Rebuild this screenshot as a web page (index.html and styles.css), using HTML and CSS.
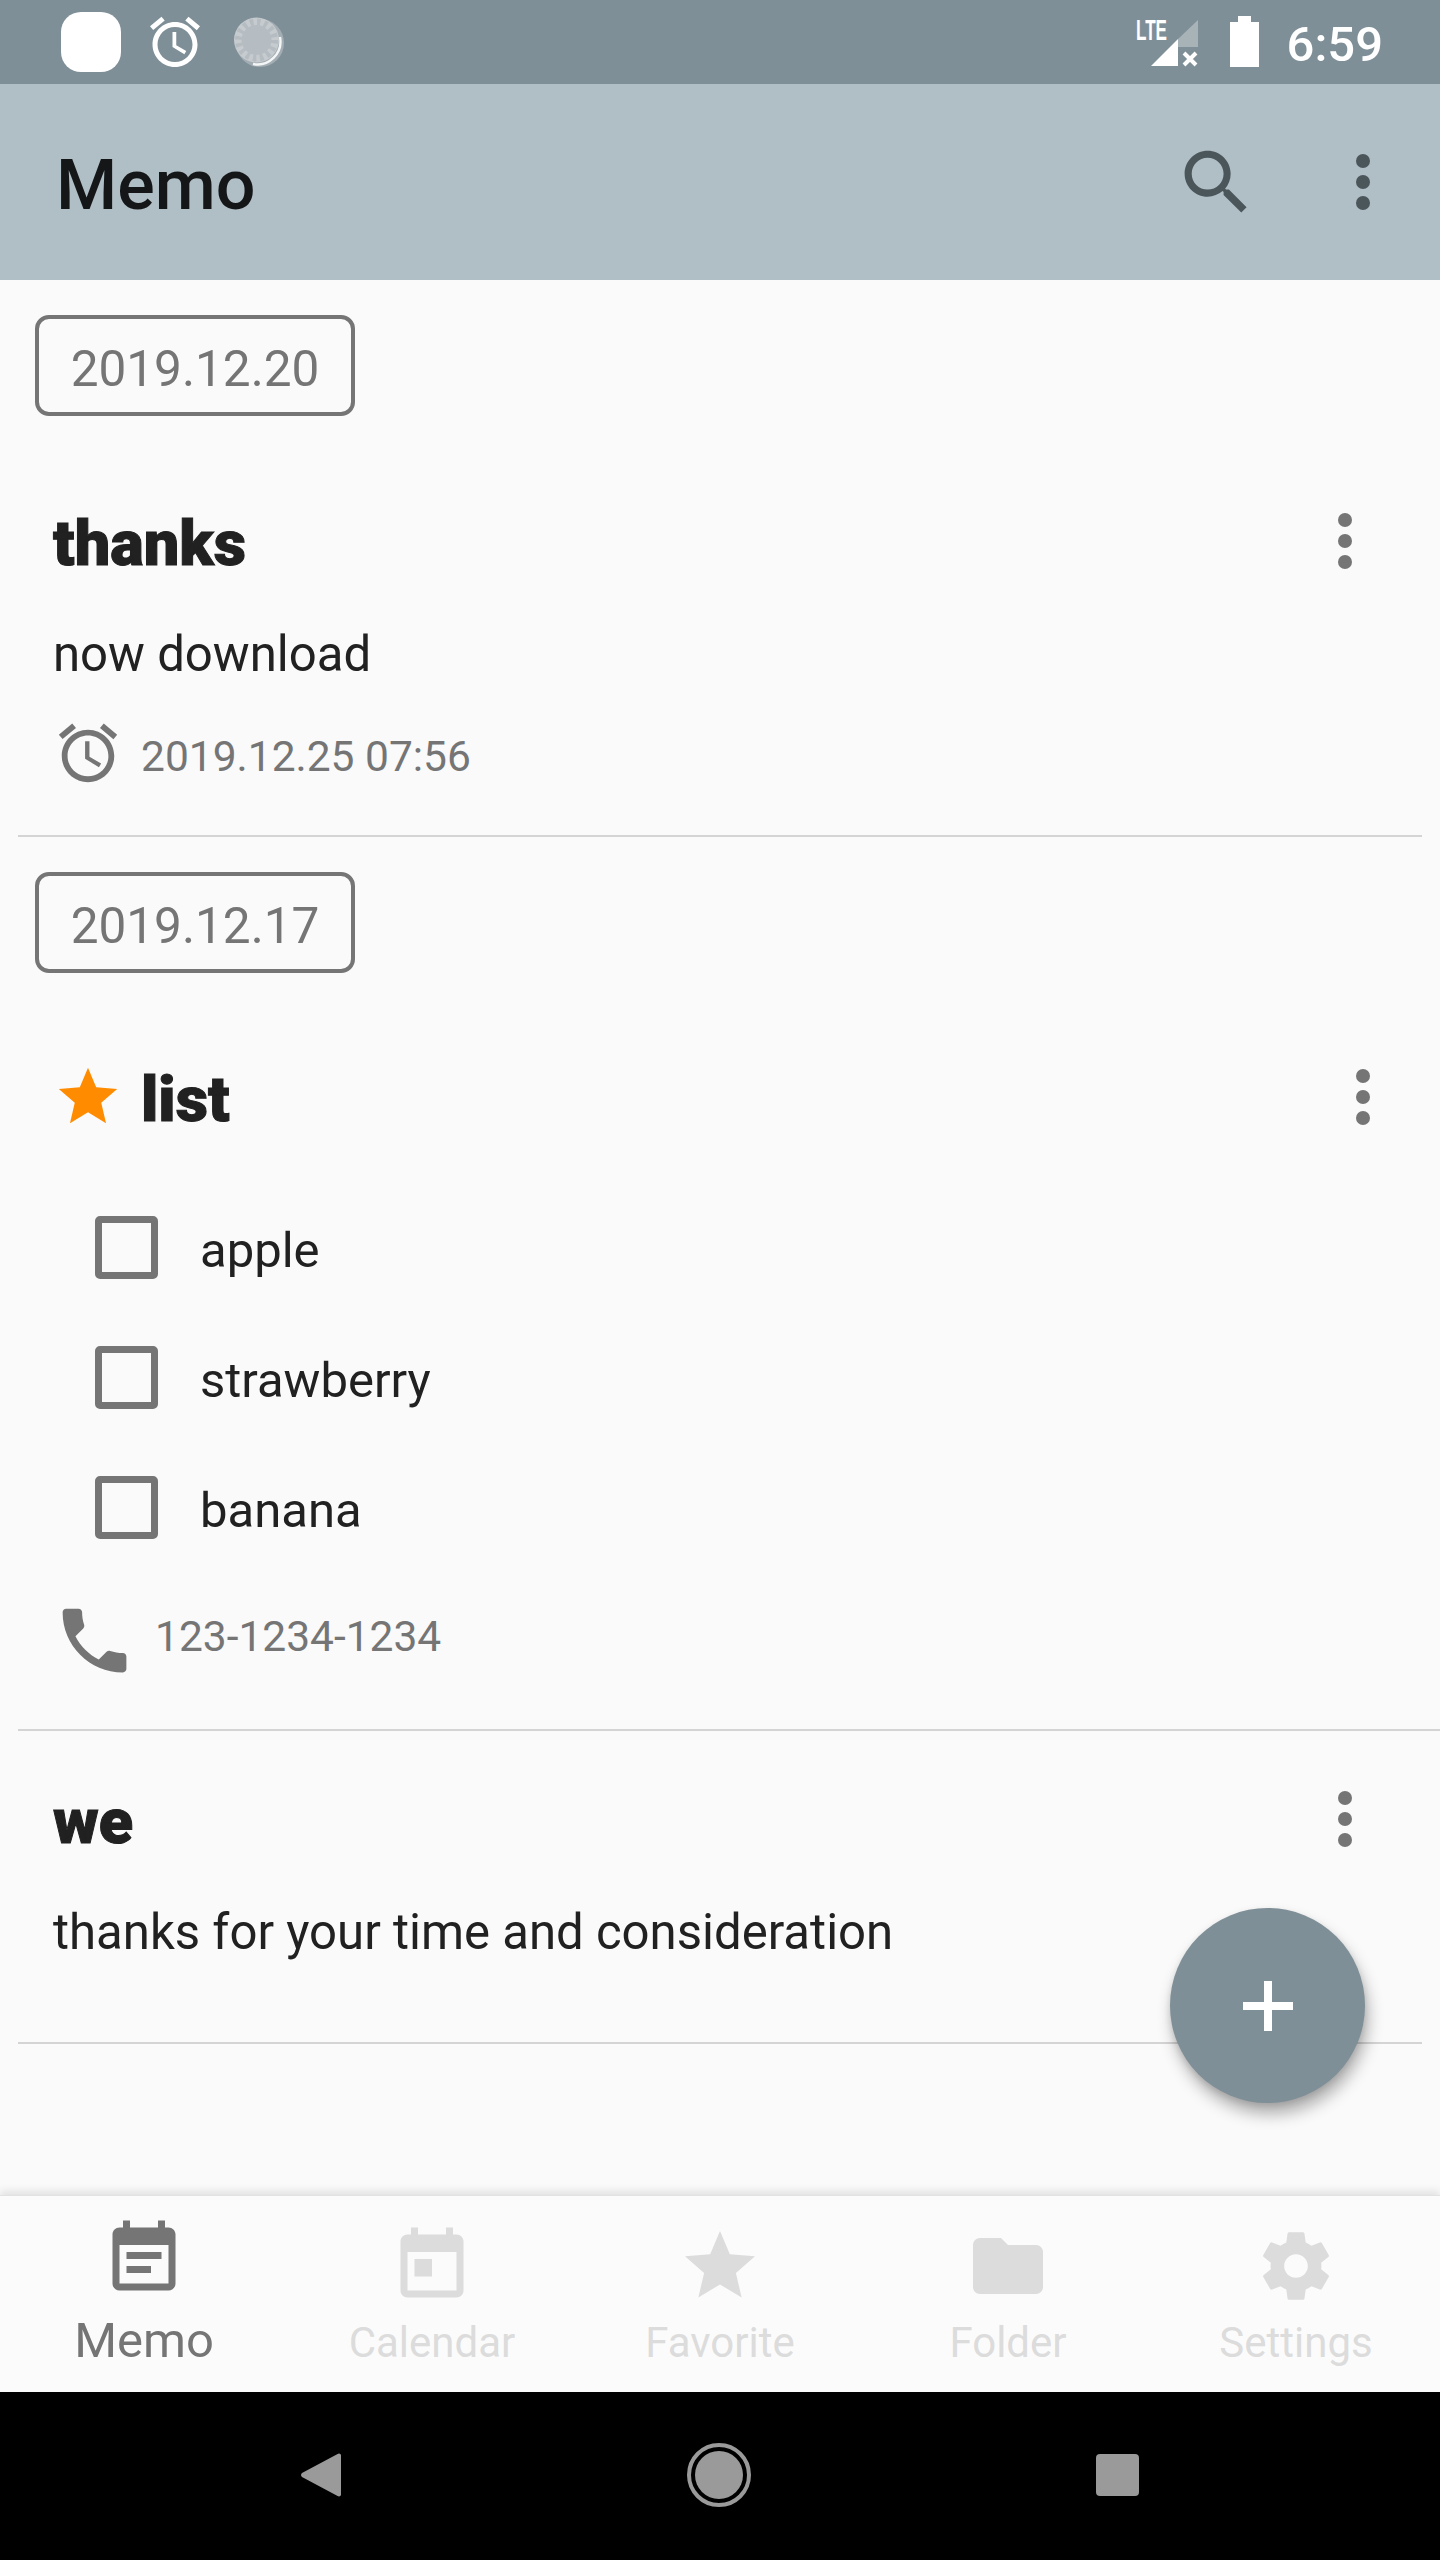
FILE: index.html
```html
<!DOCTYPE html>
<html lang="en">
<head>
<meta charset="utf-8">
<title>Memo</title>
<link rel="stylesheet" href="styles.css">
</head>
<body>
<div class="phone">
  <header class="status">
    <div class="status-left">
      <span class="app-dot"></span>
      <svg class="ic-60" viewBox="0 0 24 24"><path class="white" d="M22 5.72l-4.6-3.86-1.29 1.53 4.6 3.86L22 5.72zM7.88 3.39L6.6 1.86 2 5.71l1.29 1.53 4.59-3.85zM12.5 8H11v6l4.75 2.85.75-1.23-4-2.37V8zM12 4c-4.97 0-9 4.03-9 9s4.03 9 9 9 9-4.03 9-9-4.03-9-9-9zm0 16c-3.87 0-7-3.13-7-7s3.13-7 7-7 7 3.13 7 7-3.13 7-7 7z"/></svg>
      <svg class="ic-60" viewBox="0 0 60 60">
        <circle cx="31" cy="31" r="24" fill="#a3aeb4"/>
        <circle cx="27.500" cy="28" r="22.500" fill="#c6cbcf"/>
        <path d="M51 25a23 23 0 0 1-27 27" fill="none" stroke="#f4f6f6" stroke-width="2.400"/>
        <circle cx="27.500" cy="28" r="15" fill="#b6bdc2"/>
        <circle cx="27.500" cy="28" r="18" fill="none" stroke="#b6bdc2" stroke-width="7" stroke-dasharray="3.500 3.570"/>
      </svg>
    </div>
    <div class="status-right">
      <svg class="signal" viewBox="0 0 62 60">
        <text class="lte" x="0" y="28" textLength="31" lengthAdjust="spacingAndGlyphs">LTE</text>
        <path class="white" d="M15 54L42 27V54Z"/>
        <path class="dim" d="M42 27L62 8V35H42Z"/>
        <path class="x" d="M48 41L60 53M60 41L48 53"/>
      </svg>
      <svg class="battery" viewBox="0 0 29 60"><path class="white" d="M8 4h13v6h8v45H0V10h8z"/></svg>
      <span class="clock">6:59</span>
    </div>
  </header>

  <div class="appbar">
    <h1 class="app-title">Memo</h1>
    <svg class="ic-search" viewBox="0 0 24 24"><path d="M15.5 14h-.79l-.28-.27C15.41 12.59 16 11.11 16 9.5 16 5.91 13.09 3 9.5 3S3 5.91 3 9.5 5.91 16 9.5 16c1.61 0 3.09-.59 4.23-1.57l.27.28v.79l5 4.99L20.49 19l-4.99-5zm-6 0C7.01 14 5 11.99 5 9.5S7.01 5 9.5 5 14 7.01 14 9.5 11.99 14 9.5 14z"/></svg>
    <span class="dots dots-bar"><i></i><i></i><i></i></span>
  </div>

  <main class="list">
    <div class="date-chip">2019.12.20</div>
    <article class="memo memo-inset">
      <div class="memo-head memo-head-a">
        <h2 class="memo-title">thanks</h2>
        <span class="dots"><i></i><i></i><i></i></span>
      </div>
      <p class="memo-body">now download</p>
      <div class="meta meta-alarm">
        <svg class="ic-70" viewBox="0 0 24 24"><path d="M22 5.72l-4.6-3.86-1.29 1.53 4.6 3.86L22 5.72zM7.88 3.39L6.6 1.86 2 5.71l1.29 1.53 4.59-3.85zM12.5 8H11v6l4.75 2.85.75-1.23-4-2.37V8zM12 4c-4.97 0-9 4.03-9 9s4.03 9 9 9 9-4.03 9-9-4.03-9-9-9zm0 16c-3.87 0-7-3.13-7-7s3.13-7 7-7 7 3.13 7 7-3.13 7-7 7z"/></svg>
        <span class="meta-text">2019.12.25 07:56</span>
      </div>
    </article>

    <div class="date-chip">2019.12.17</div>
    <article class="memo memo-list">
      <div class="memo-head memo-head-b">
        <svg class="ic-70 star" viewBox="0 0 24 24"><path d="M12 17.27L18.18 21l-1.64-7.03L22 9.24l-7.19-.61L12 2 9.19 8.63 2 9.24l5.46 4.73L5.82 21z"/></svg>
        <h2 class="memo-title">list</h2>
        <span class="dots"><i></i><i></i><i></i></span>
      </div>
      <ul class="checks">
        <li class="check"><span class="box"></span><span class="check-text">apple</span></li>
        <li class="check"><span class="box"></span><span class="check-text">strawberry</span></li>
        <li class="check"><span class="box"></span><span class="check-text">banana</span></li>
      </ul>
      <div class="meta meta-phone">
        <svg class="ic-85" viewBox="0 0 24 24"><path d="M6.62 10.79c1.44 2.83 3.76 5.14 6.59 6.59l2.2-2.2c.27-.27.67-.36 1.02-.24 1.12.37 2.33.57 3.57.57.55 0 1 .45 1 1V20c0 .55-.45 1-1 1-9.39 0-17-7.61-17-17 0-.55.45-1 1-1h3.5c.55 0 1 .45 1 1 0 1.25.2 2.45.57 3.57.11.35.03.74-.25 1.02l-2.2 2.2z"/></svg>
        <span class="meta-text">123-1234-1234</span>
      </div>
    </article>

    <article class="memo memo-inset memo-last">
      <div class="memo-head memo-head-c">
        <h2 class="memo-title">we</h2>
        <span class="dots"><i></i><i></i><i></i></span>
      </div>
      <p class="memo-body">thanks for your time and consideration</p>
    </article>

    <button class="fab" type="button"><span class="plus"></span></button>
  </main>

  <nav class="tabs">
    <div class="tab tab-active">
      <svg class="tab-ic" viewBox="0 0 24 24"><path d="M19 3h-1V1h-2v2H8V1H6v2H5c-1.1 0-2 .9-2 2v14c0 1.1.9 2 2 2h14c1.1 0 2-.9 2-2V5c0-1.1-.9-2-2-2zm0 16H5V8h14v11zM7 10h10v2H7zM7 14h7v2H7z"/></svg>
      <span class="tab-label">Memo</span>
    </div>
    <div class="tab">
      <svg class="tab-ic" viewBox="0 0 24 24"><path d="M19 3h-1V1h-2v2H8V1H6v2H5c-1.1 0-2 .9-2 2v14c0 1.1.9 2 2 2h14c1.1 0 2-.9 2-2V5c0-1.1-.9-2-2-2zm0 16H5V8h14v11zM7 10h5v5H7z"/></svg>
      <span class="tab-label">Calendar</span>
    </div>
    <div class="tab">
      <svg class="tab-ic" viewBox="0 0 24 24"><path d="M12 17.27L18.18 21l-1.64-7.03L22 9.24l-7.19-.61L12 2 9.19 8.63 2 9.24l5.46 4.73L5.82 21z"/></svg>
      <span class="tab-label">Favorite</span>
    </div>
    <div class="tab">
      <svg class="tab-ic" viewBox="0 0 24 24"><path d="M10 4H4c-1.1 0-1.99.9-1.99 2L2 18c0 1.1.9 2 2 2h16c1.1 0 2-.9 2-2V8c0-1.1-.9-2-2-2h-8l-2-2z"/></svg>
      <span class="tab-label">Folder</span>
    </div>
    <div class="tab">
      <svg class="tab-ic" viewBox="-0.4 -0.4 24.800 24.800"><path d="M19.43 12.98c.04-.32.07-.64.07-.98s-.03-.66-.07-.98l2.11-1.65c.19-.15.24-.42.12-.64l-2-3.46c-.12-.22-.39-.3-.61-.22l-2.49 1c-.52-.4-1.08-.73-1.69-.98l-.38-2.65C14.46 2.18 14.25 2 14 2h-4c-.25 0-.46.18-.49.42l-.38 2.65c-.61.25-1.17.59-1.69.98l-2.49-1c-.23-.09-.49 0-.61.22l-2 3.46c-.13.22-.07.49.12.64l2.11 1.65c-.04.32-.07.65-.07.98s.03.66.07.98l-2.11 1.65c-.19.15-.24.42-.12.64l2 3.46c.12.22.39.3.61.22l2.49-1c.52.4 1.08.73 1.69.98l.38 2.65c.03.24.24.42.49.42h4c.25 0 .46-.18.49-.42l.38-2.65c.61-.25 1.17-.59 1.69-.98l2.49 1c.23.09.49 0 .61-.22l2-3.46c.12-.22.07-.49-.12-.64l-2.11-1.65zM12 15.5c-1.93 0-3.5-1.57-3.5-3.5s1.57-3.5 3.5-3.5 3.5 1.57 3.5 3.5-1.57 3.5-3.5 3.5z"/></svg>
      <span class="tab-label">Settings</span>
    </div>
  </nav>

  <footer class="sysnav">
    <svg class="sys-back" viewBox="0 0 40 46"><path d="M38 1.5c1 0 2 .8 2 2v39c0 1.2-1 2-2 2-.5 0-1-.2-1.400-.5L1 25c-1.300-1-1.300-3 0-4L36.600 2c.4-.3.9-.5 1.400-.5z"/></svg>
    <svg class="sys-home" viewBox="0 0 64 64"><circle cx="32" cy="32" r="30" fill="none" stroke="#9a9a9a" stroke-width="4"/><circle cx="32" cy="32" r="24"/></svg>
    <span class="sys-recent"></span>
  </footer>
</div>
</body>
</html>
```
FILE: styles.css
```css
* { box-sizing: border-box; }
html, body { margin: 0; padding: 0; }
body { font-family: Roboto, "Noto Sans", sans-serif; background: #fafafa; color: #212121; }
h1, h2, p, ul { margin: 0; padding: 0; }
ul { list-style: none; }

.phone { width: 1440px; height: 2560px; display: flex; flex-direction: column; overflow: hidden; }

/* status bar */
.status { height: 84px; flex: none; background: #7f8f97; display: flex; justify-content: space-between; align-items: center; padding: 0 57px 0 61px; }
.status-left { display: flex; align-items: center; gap: 24px; }
.status-right { display: flex; align-items: center; }
.app-dot { width: 60px; height: 60px; background: #fff; border-radius: 20px; }
.ic-60 { width: 60px; height: 60px; display: block; }
.white { fill: #fff; }
.dim { fill: #fff; fill-opacity: .32; }
.x { fill: none; stroke: #fff; stroke-width: 4; }
.lte { font-family: "Liberation Sans", sans-serif; font-weight: 700; font-size: 30px; fill: #fff; }
.signal { width: 62px; height: 60px; display: block; }
.battery { width: 29px; height: 60px; display: block; margin: 0 28px 0 32px; }
.clock { color: #fff; font-size: 49px; font-weight: 500; line-height: 60px; padding-top: 5px; }

/* app bar */
.appbar { height: 196px; flex: none; background: #b0bec5; display: flex; align-items: center; padding: 0 49px 0 56px; color: #4b565b; }
.app-title { flex: 1; font-size: 70px; font-weight: 500; color: #141617; line-height: 84px; padding-top: 6px; }
.ic-search { width: 85px; height: 85px; display: block; margin-right: 76px; fill: #4b565b; }

/* overflow dots */
.dots { width: 56px; display: flex; flex-direction: column; align-items: center; gap: 7px; color: #757575; flex: none; }
.dots i { width: 14px; height: 14px; border-radius: 50%; background: currentColor; display: block; }
.dots-bar { color: #4b565b; }

/* list */
.list { flex: 1; position: relative; background: #fafafa; }
.date-chip { margin: 35px 0 0 35px; width: 320px; height: 101px; padding-top: 6px; border: 4px solid #757575; border-radius: 14px; display: flex; align-items: center; justify-content: center; font-size: 49.500px; color: #757575; }

.memo { margin-left: 18px; border-bottom: 2px solid #d4d4d4; }
.memo-inset { margin-right: 18px; }
.memo-head { height: 96px; display: flex; align-items: center; padding-right: 49px; }
.memo-head .dots { margin-left: auto; }
.memo-head-a { margin-top: 77px; padding-left: 35px; }
.memo-head-b { margin-top: 76px; padding-left: 35px; }
.memo-head-c { margin-top: 40px; padding-left: 35px; }
.memo-title { font-size: 63px; font-weight: 900; color: #212121; line-height: 84px; padding-top: 6px; -webkit-text-stroke: 1px #212121; }
.star { fill: #ff8c00; margin-right: 18px; }
.memo-body { padding-left: 35px; font-size: 49.100px; line-height: 64px; margin-top: 33px; color: #212121; }
.memo-last { padding-bottom: 78px; }

.ic-70 { width: 70px; height: 70px; display: block; flex: none; }
.ic-85 { width: 85px; height: 85px; display: block; flex: none; }

.meta { display: flex; align-items: center; font-size: 42.500px; color: #757575; fill: #757575; }
.meta-alarm { margin-top: 35px; padding: 0 0 50px 35px; height: 114px; }
.meta-alarm .meta-text { margin-left: 18px; padding-top: 6px; }
.meta-phone { margin-top: 26px; padding: 0 0 46px 34px; height: 131px; }
.meta-phone .meta-text { margin-left: 18px; padding-bottom: 8px; }

.checks { margin-top: 37px; padding-left: 77px; }
.check { height: 130px; display: flex; align-items: center; font-size: 49px; color: #212121; }
.check-text { padding-top: 6px; }
.box { width: 63px; height: 63px; border: 7px solid #757575; border-radius: 5px; margin-right: 42px; flex: none; }

.fab { position: absolute; right: 75px; bottom: 92px; width: 195px; height: 195px; border: 0; padding: 0; border-radius: 50%; background: #7f8f97; box-shadow: 3px 11px 16px rgba(0,0,0,.3), 0 3px 6px rgba(0,0,0,.1); display: flex; align-items: center; justify-content: center; }
.plus { position: relative; width: 50px; height: 50px; display: block; }
.plus::before, .plus::after { content: ""; position: absolute; background: #fff; }
.plus::before { left: 21px; top: 0; width: 8px; height: 50px; }
.plus::after { top: 21px; left: 0; width: 50px; height: 8px; }

/* bottom tabs */
.tabs { height: 197px; flex: none; background: #fbfbfb; display: grid; grid-template-columns: repeat(5, 288px); border-top: 1px solid #e2e2e2; box-shadow: 0 -4px 8px rgba(0,0,0,.1); position: relative; }
.tab { display: flex; flex-direction: column; align-items: center; padding-top: 28px; fill: #dcdcdc; color: #dcdcdc; font-size: 42px; }
.tab-ic { width: 84px; height: 84px; display: block; }
.tab-label { line-height: 56px; margin-top: 7px; }
.tab-active { padding-top: 21px; fill: #757575; color: #757575; font-size: 49px; }
.tab-active .tab-label { margin-top: 12px; }

/* system navigation */
.sysnav { height: 168px; flex: none; background: #000; display: flex; align-items: center; padding-left: 301px; padding-bottom: 2px; fill: #9a9a9a; }
.sys-back { width: 40px; height: 46px; display: block; }
.sys-home { width: 64px; height: 64px; display: block; margin-left: 346px; }
.sys-recent { width: 43px; height: 42px; background: #9a9a9a; border-radius: 4px; margin-left: 345px; }
```
